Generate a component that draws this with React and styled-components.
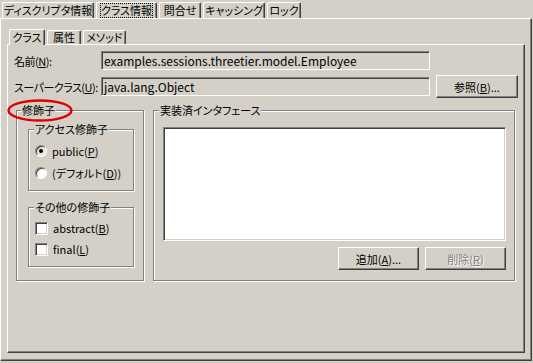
import React from 'react';
import styled, { createGlobalStyle } from 'styled-components';

const GlobalStyle = createGlobalStyle`
    html, body {
        margin: 0;
        padding: 0;
        background: #d4d0c8;
    }
    body {
        font-family: "Noto Sans CJK JP", "Noto Sans", sans-serif;
        font-size: 11px;
        font-feature-settings: "palt";
        color: #000;
    }
`

const Window = styled.div`
    width: 533px;
    height: 363px;
    background: #d4d0c8;
    display: flex;
    flex-direction: column;
    overflow: hidden;
`

const TabStrip = styled.div`
    display: flex;
    align-items: flex-end;
    gap: 2px;
    height: ${p => p.$h}px;
    padding-left: 2px;
    position: relative;
    z-index: 1;
`

const Tab = styled.div`
    box-sizing: border-box;
    flex-shrink: 0;
    width: ${p => p.$w}px;
    height: ${p => (p.$active ? p.$th + 2 : p.$th)}px;
    margin-bottom: ${p => (p.$active ? -1 : 0)}px;
    padding-bottom: ${p => (p.$active ? 1 : 0)}px;
    background: #d4d0c8;
    border-top: 1px solid #fff;
    border-left: 1px solid #fff;
    border-right: 1px solid #404040;
    border-top-left-radius: 2px;
    border-top-right-radius: 2px;
    box-shadow: inset -1px 0 0 #808080;
    display: flex;
    align-items: center;
    justify-content: center;
    line-height: 13px;
    white-space: nowrap;
    overflow: hidden;
`

const Focus = styled.span`
    outline: 1px dotted #000;
    outline-offset: 0;
`

const OuterPanel = styled.div`
    box-sizing: border-box;
    width: 532px;
    height: 343px;
    border-top: 1px solid #fff;
    border-left: 1px solid #fff;
    border-right: 1px solid #404040;
    border-bottom: 1px solid #404040;
    box-shadow: inset -1px -1px 0 #808080;
    padding: 8px 0 0 6px;
    display: flex;
    flex-direction: column;
`

const InnerPanel = styled.div`
    box-sizing: border-box;
    width: 518px;
    height: 309px;
    border-top: 1px solid #fff;
    border-left: 1px solid #fff;
    border-right: 1px solid #404040;
    border-bottom: 1px solid #404040;
    box-shadow: inset -1px -1px 0 #808080;
    padding: 6px 0 0 6px;
    display: flex;
    flex-direction: column;
`

const FieldRow = styled.div`
    display: flex;
    align-items: center;
    height: ${p => p.$h}px;
    margin-bottom: ${p => p.$mb || 0}px;
`

const Label = styled.div`
    flex-shrink: 0;
    width: 87px;
    line-height: 14px;
    letter-spacing: -0.5px;
    white-space: nowrap;
`

const TextField = styled.div`
    box-sizing: border-box;
    flex-shrink: 0;
    width: 329px;
    height: 19px;
    background: #d4d0c8;
    border-top: 1px solid #808080;
    border-left: 1px solid #808080;
    border-right: 1px solid #fff;
    border-bottom: 1px solid #fff;
    box-shadow: inset 1px 1px 0 #404040;
    padding: 0 2px;
    font-size: 12px;
    line-height: 17px;
    white-space: nowrap;
    overflow: hidden;
`

const Button = styled.div`
    box-sizing: border-box;
    flex-shrink: 0;
    width: ${p => p.$w}px;
    height: 23px;
    margin-left: ${p => p.$ml || 0}px;
    background: #d4d0c8;
    border-top: 1px solid #fff;
    border-left: 1px solid #fff;
    border-right: 1px solid #404040;
    border-bottom: 1px solid #404040;
    box-shadow: inset -1px -1px 0 #808080;
    display: flex;
    align-items: center;
    justify-content: center;
    line-height: 14px;
    color: ${p => (p.$disabled ? '#808080' : '#000')};
    text-shadow: ${p => (p.$disabled ? '1px 1px 0 #fff' : 'none')};
`

const GroupsRow = styled.div`
    display: flex;
    gap: 9px;
    margin: 12px 0 0 2px;
`

const Group = styled.div`
    box-sizing: border-box;
    width: ${p => p.$w}px;
    height: ${p => (p.$h ? `${p.$h}px` : 'auto')};
    margin-top: ${p => p.$mt || 0}px;
    border: 1px solid #808080;
    box-shadow: inset 1px 1px 0 #fff, 1px 1px 0 #fff;
    display: flex;
    flex-direction: column;
`

const GroupTitle = styled.div`
    position: relative;
    align-self: flex-start;
    margin: -8px 0 0 ${p => p.$ml}px;
    padding: 0 1px;
    background: #d4d0c8;
    line-height: 14px;
    white-space: nowrap;
`

const GroupBody = styled.div`
    display: flex;
    flex-direction: column;
    flex: 1;
    padding: ${p => p.$pad};
    gap: ${p => p.$gap || 0}px;
`

const Mark = styled.svg`
    position: absolute;
    left: -14px;
    top: -4px;
    pointer-events: none;
`

const Option = styled.div`
    display: flex;
    align-items: center;
    gap: 5px;
    height: 16px;
    line-height: 14px;
    white-space: nowrap;
`

const Radio = styled.span`
    box-sizing: border-box;
    flex-shrink: 0;
    width: 12px;
    height: 12px;
    border-radius: 50%;
    border: 1px solid;
    border-color: #808080 #fff #fff #808080;
    background: ${p => (p.$checked ? '#e8e6e1' : '#fff')};
    box-shadow: inset 1px 1px 0 #404040;
    display: flex;
    align-items: center;
    justify-content: center;
    &::after {
        content: '';
        width: 4px;
        height: 4px;
        border-radius: 50%;
        background: #000;
        display: ${p => (p.$checked ? 'block' : 'none')};
    }
`

const Checkbox = styled.span`
    box-sizing: border-box;
    flex-shrink: 0;
    width: 13px;
    height: 13px;
    border: 1px solid;
    border-color: #808080 #fff #fff #808080;
    background: #fff;
    box-shadow: inset 1px 1px 0 #404040, inset -1px -1px 0 #d4d0c8;
`

const ListBox = styled.div`
    box-sizing: border-box;
    height: 114px;
    background: #fff;
    border: 1px solid;
    border-color: #808080 #fff #fff #808080;
    box-shadow: inset 1px 1px 0 #404040, inset -1px -1px 0 #d4d0c8;
`

const ButtonRow = styled.div`
    display: flex;
    justify-content: flex-end;
    margin-top: 6px;
`

const outerTabs = [
    { label: 'ディスクリプタ情報', w: 92 },
    { label: 'クラス情報', w: 61, focus: true },
    { label: '問合せ', w: 42 },
    { label: 'キャッシング', w: 62 },
    { label: 'ロック', w: 34 },
];

const innerTabs = [
    { label: 'クラス', w: 36, active: true },
    { label: '属性', w: 34 },
    { label: 'メソッド', w: 43 },
];

const App = () => {

    return (
        <Window>
            <GlobalStyle />
            <TabStrip $h={18}>
                {outerTabs.map(t => (
                    <Tab key={t.label} $w={t.w} $th={16}>
                        {t.focus ? <Focus>{t.label}</Focus> : t.label}
                    </Tab>
                ))}
            </TabStrip>
            <OuterPanel>
                <TabStrip $h={17}>
                    {innerTabs.map(t => (
                        <Tab key={t.label} $w={t.w} $th={14} $active={t.active}>
                            {t.label}
                        </Tab>
                    ))}
                </TabStrip>
                <InnerPanel>
                    <FieldRow $h={19} $mb={5}>
                        <Label>名前(<u>N</u>):</Label>
                        <TextField>examples.sessions.threetier.model.Employee</TextField>
                    </FieldRow>
                    <FieldRow $h={23}>
                        <Label>スーパークラス(<u>U</u>):</Label>
                        <TextField>java.lang.Object</TextField>
                        <Button $w={82} $ml={6}>参照(<u>B</u>)...</Button>
                    </FieldRow>
                    <GroupsRow>
                        <Group $w={128} $h={171}>
                            <GroupTitle $ml={4}>
                                修飾子
                                <Mark width="66" height="23" viewBox="0 0 66 23">
                                    <ellipse cx="33" cy="11.5" rx="31.5" ry="10" fill="none" stroke="#e00000" strokeWidth="2.4" />
                                </Mark>
                            </GroupTitle>
                            <GroupBody $pad="12px 9px 0 11px">
                                <Group $w={106}>
                                    <GroupTitle $ml={5}>アクセス修飾子</GroupTitle>
                                    <GroupBody $pad="7px 6px 9px 6px" $gap={6}>
                                        <Option><Radio $checked /><span>public(<u>P</u>)</span></Option>
                                        <Option><Radio /><span>(デフォルト(<u>D</u>))</span></Option>
                                    </GroupBody>
                                </Group>
                                <Group $w={106} $mt={16}>
                                    <GroupTitle $ml={5}>その他の修飾子</GroupTitle>
                                    <GroupBody $pad="6px 6px 9px 6px" $gap={5}>
                                        <Option><Checkbox /><span>abstract(<u>B</u>)</span></Option>
                                        <Option><Checkbox /><span>final(<u>L</u>)</span></Option>
                                    </GroupBody>
                                </Group>
                            </GroupBody>
                        </Group>
                        <Group $w={362} $h={171}>
                            <GroupTitle $ml={5}>実装済インタフェース</GroupTitle>
                            <GroupBody $pad="10px 8px 0 9px">
                                <ListBox />
                                <ButtonRow>
                                    <Button $w={81}>追加(<u>A</u>)...</Button>
                                    <Button $w={81} $ml={6} $disabled>削除(<u>R</u>)</Button>
                                </ButtonRow>
                            </GroupBody>
                        </Group>
                    </GroupsRow>
                </InnerPanel>
            </OuterPanel>
        </Window>
    )
}

export default App;
